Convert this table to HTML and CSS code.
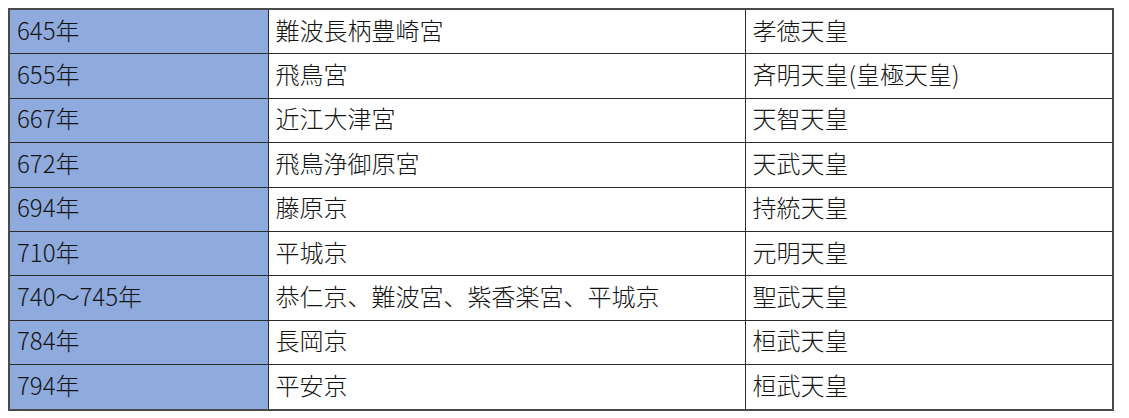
FILE: index.html
```html
<!DOCTYPE html>
<html lang="ja">
<head>
<meta charset="utf-8">
<title>都の変遷</title>
<link rel="stylesheet" href="styles.css">
</head>
<body>
<table class="capitals">
  <colgroup>
    <col class="col-year">
    <col class="col-palace">
    <col class="col-emperor">
  </colgroup>
  <tbody>
    <tr><td class="year">645年</td><td>難波長柄豊崎宮</td><td>孝徳天皇</td></tr>
    <tr><td class="year">655年</td><td>飛鳥宮</td><td>斉明天皇(皇極天皇)</td></tr>
    <tr><td class="year">667年</td><td>近江大津宮</td><td>天智天皇</td></tr>
    <tr><td class="year">672年</td><td>飛鳥浄御原宮</td><td>天武天皇</td></tr>
    <tr><td class="year">694年</td><td>藤原京</td><td>持統天皇</td></tr>
    <tr><td class="year">710年</td><td>平城京</td><td>元明天皇</td></tr>
    <tr><td class="year">740～745年</td><td>恭仁京、難波宮、紫香楽宮、平城京</td><td>聖武天皇</td></tr>
    <tr><td class="year">784年</td><td>長岡京</td><td>桓武天皇</td></tr>
    <tr><td class="year">794年</td><td>平安京</td><td>桓武天皇</td></tr>
  </tbody>
</table>
</body>
</html>
```

FILE: styles.css
```css
html, body {
  margin: 0;
  padding: 0;
  background: #ffffff;
}

body {
  padding: 8px;
  font-family: "Noto Sans CJK JP", "Noto Sans", sans-serif;
}

.capitals {
  border-collapse: collapse;
  table-layout: fixed;
  width: 1104px;
  border: 2px solid #4a4a4a;
  color: #141414;
  font-size: 24px;
  line-height: 1;
}

.col-year { width: 259px; }
.col-palace { width: 477px; }
.col-emperor { width: 368px; }

.capitals td {
  border: 1px solid #2b2b2b;
  height: 39.4px;
  padding: 0 0 4px 7px;
  vertical-align: middle;
  white-space: nowrap;
  font-weight: 300;
}

.capitals td.year {
  background: #8faadc;
}
```
